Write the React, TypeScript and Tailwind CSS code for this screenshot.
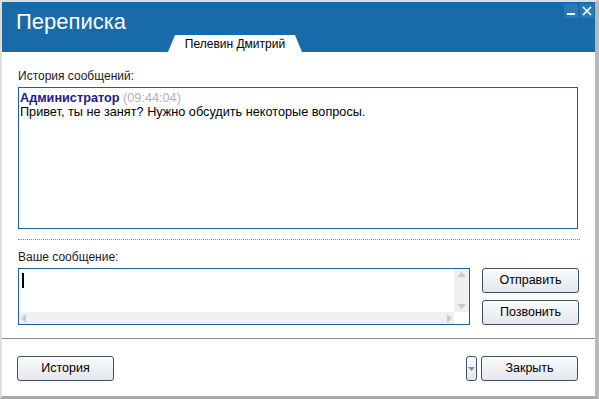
const font = { fontFamily: '"Liberation Sans", Arial, sans-serif' };

function Btn({ label, className = "" }: { label: string; className?: string }) {
  return (
    <button
      className={`h-[25px] w-[97px] rounded-[3px] border border-[#3f5366] bg-gradient-to-b from-[#fbfbfc] to-[#e3e6ec] text-[12.5px] text-black ${className}`}
    >
      {label}
    </button>
  );
}

export default function App() {
  return (
    <div
      className="h-[399px] w-[599px] border-t-2 border-l-2 border-r-[4px] border-b-[3px] border-t-[#dedede] border-l-[#dedede] border-r-[#b9b9b9] border-b-[#a9a9a9] bg-white flex flex-col"
      style={font}
    >
      <div className="relative h-[50px] bg-[#186ba8] flex-shrink-0">
        <div className="pl-[14px] pt-[6px] text-[22px] leading-[28px] text-white">Переписка</div>
        <div className="absolute right-[1px] top-[2px] flex gap-[2px]">
          <div className="flex h-[14px] w-[14px] items-center justify-center bg-[#2a79b3]">
            <div className="mt-[5px] h-[2px] w-[8px] bg-white" />
          </div>
          <div className="flex h-[14px] w-[14px] items-center justify-center bg-[#2a79b3]">
            <svg width="10" height="10" viewBox="0 0 10 10">
              <path d="M1 1L9 9M9 1L1 9" stroke="white" strokeWidth="1.6" />
            </svg>
          </div>
        </div>
        <div className="absolute bottom-0 left-[166px] h-[17px] w-[134px]">
          <svg className="absolute inset-0" width="134" height="17" viewBox="0 0 134 17">
            <polygon points="0,17 7,0 127,0 134,17" fill="white" />
          </svg>
          <div className="relative pt-[2px] text-center text-[12px] leading-[14px] text-black">Пелевин Дмитрий</div>
        </div>
      </div>

      <div className="flex-1 px-[16px] pt-[17px]">
        <div className="text-[12px] leading-[14px] text-[#1a1a1a]">История сообщений:</div>
        <div className="mt-[4px] h-[142px] w-[560px] border border-[#1e5f96] px-[1px] pt-[3px] text-[12.7px] leading-[14px]">
          <div>
            <span className="font-bold text-[#20207e]">Администратор</span>{" "}
            <span className="text-[#b3b3b3]">(09:44:04)</span>
          </div>
          <div className="text-black">Привет, ты не занят? Нужно обсудить некоторые вопросы.</div>
        </div>
        <div className="mt-[10px] w-[562px] border-t border-dotted border-[#8a8a8a]" />
        <div className="mt-[10px] text-[12px] leading-[14px] text-[#1a1a1a]">Ваше сообщение:</div>
        <div className="mt-[4px] flex gap-[12px]">
          <div className="relative h-[57px] w-[452px] border border-[#1e5f96]">
            <div className="absolute left-[3px] top-[4px] h-[15px] w-[2px] bg-black" />
            <div className="absolute right-0 top-0 flex h-[43px] w-[15px] flex-col items-center justify-between bg-[#eff0f3] py-[3px]">
              <svg width="9" height="5" viewBox="0 0 9 5">
                <polygon points="0,5 4.5,0 9,5" fill="#c9cbd0" />
              </svg>
              <svg width="9" height="5" viewBox="0 0 9 5">
                <polygon points="0,0 4.5,5 9,0" fill="#c9cbd0" />
              </svg>
            </div>
            <div className="absolute bottom-0 left-0 flex h-[12px] w-[435px] items-center justify-between bg-[#eff0f3] px-[2px]">
              <svg width="5" height="9" viewBox="0 0 5 9">
                <polygon points="5,0 0,4.5 5,9" fill="#c9cbd0" />
              </svg>
              <svg width="5" height="9" viewBox="0 0 5 9">
                <polygon points="0,0 5,4.5 0,9" fill="#c9cbd0" />
              </svg>
            </div>
          </div>
          <div className="flex flex-col gap-[7px]">
            <Btn label="Отправить" />
            <Btn label="Позвонить" />
          </div>
        </div>
      </div>

      <div className="border-t border-[#8c8c8c] flex h-[58px] flex-shrink-0 items-start justify-between pl-[15px] pr-[17px] pt-[17px]">
        <Btn label="История" />
        <div className="flex gap-[4px]">
          <button className="flex h-[25px] w-[11px] items-center justify-center rounded-[3px] border border-[#3f5366] bg-gradient-to-b from-[#fbfbfc] to-[#e3e6ec]">
            <svg width="7" height="4" viewBox="0 0 7 4">
              <polygon points="0,0 3.5,4 7,0" fill="#8a8f96" />
            </svg>
          </button>
          <Btn label="Закрыть" />
        </div>
      </div>
    </div>
  );
}
